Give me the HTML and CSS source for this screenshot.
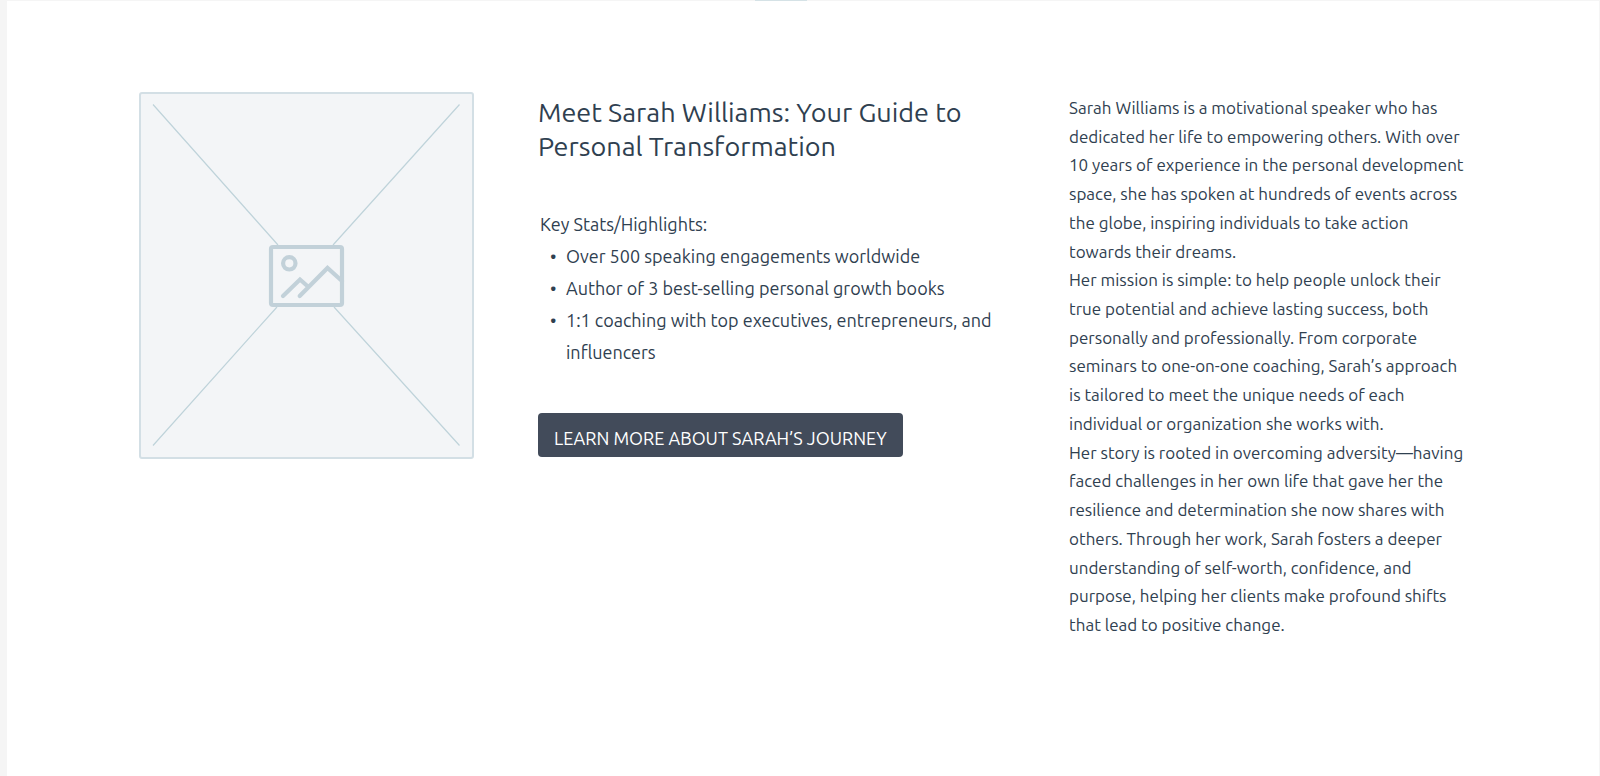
FILE: index.html
```html
<!DOCTYPE html>
<html lang="en">
<head>
<meta charset="utf-8">
<title>Meet Sarah Williams</title>
<link rel="stylesheet" href="styles.css">
</head>
<body>
<main class="page">
  <div class="divider"></div>
  <section class="about">
    <svg class="photo" viewBox="0 0 335 367" role="img" aria-label="Image placeholder">
      <rect class="photo-frame" x="1" y="1" width="333" height="365" rx="2"/>
      <path class="photo-cross" d="M14 12.500 139 153M320.500 12.500 194 153M14 353.500 138 215M320.500 353.500 195 215"/>
      <g class="photo-icon">
        <rect x="132" y="155" width="71" height="58" rx="2"/>
        <circle cx="150.300" cy="171.300" r="6.200"/>
        <path d="M144 204 161 187.500 169.500 195M160.700 204 188.500 176 203 189"/>
      </g>
    </svg>
    <div class="intro">
      <h1 class="title">Meet Sarah Williams: Your Guide to Personal Transformation</h1>
      <div class="stats">
        <p class="stats-label">Key Stats/Highlights:</p>
        <ul class="stats-list">
          <li>Over 500 speaking engagements worldwide</li>
          <li>Author of 3 best-selling personal growth books</li>
          <li>1:1 coaching with top executives, entrepreneurs, and influencers</li>
        </ul>
      </div>
      <button class="cta" type="button">LEARN MORE ABOUT SARAH’S JOURNEY</button>
    </div>
    <div class="bio">
      <p>Sarah Williams is a motivational speaker who has<br>dedicated her life to empowering others. With over<br>10 years of experience in the personal development<br>space, she has spoken at hundreds of events across<br>the globe, inspiring individuals to take action<br>towards their dreams.</p>
      <p>Her mission is simple: to help people unlock their<br>true potential and achieve lasting success, both<br>personally and professionally. From corporate<br>seminars to one-on-one coaching, Sarah’s approach<br>is tailored to meet the unique needs of each<br>individual or organization she works with.</p>
      <p>Her story is rooted in overcoming adversity—having<br>faced challenges in her own life that gave her the<br>resilience and determination she now shares with<br>others. Through her work, Sarah fosters a deeper<br>understanding of self-worth, confidence, and<br>purpose, helping her clients make profound shifts<br>that lead to positive change.</p>
    </div>
  </section>
</main>
</body>
</html>
```
FILE: styles.css
```css
* { box-sizing: border-box; margin: 0; padding: 0; }

body {
  display: flex;
  min-height: 100vh;
  padding: 1px 1px 0 7px;
  background: #f5f5f5;
  color: #2f4050;
  font-family: Ubuntu, "Noto Sans", "Open Sans", sans-serif;
  font-size: 17px;
}

.page {
  position: relative;
  flex: 1;
  background: #fff;
}

.divider {
  position: absolute;
  top: -1px;
  left: 47%;
  width: 52px;
  height: 1px;
  background: #d5e2e6;
}

.about {
  display: grid;
  grid-template-columns: 335fr 467fr 398fr;
  gap: 64px;
  align-items: start;
  padding: 91px 132px;
}

.photo { display: block; width: 100%; }
.photo-frame { fill: #f3f5f7; stroke: #d3dfe5; stroke-width: 2; }
.photo-cross { fill: none; stroke: #bfd3da; stroke-width: 1.2; }
.photo-icon { fill: none; stroke: #c2d1d9; stroke-width: 4.2; stroke-linecap: round; }

.intro { padding-top: 3px; }

.title {
  font-size: 27px;
  font-weight: 400;
  line-height: 34px;
}

.stats {
  margin-top: 45px;
  padding-left: 2px;
  font-size: 18px;
  line-height: 32px;
}

.stats-list { padding-left: 26px; list-style: none; }
.stats-list li::before {
  content: "•";
  float: left;
  width: 16px;
  margin-left: -16px;
}

.cta {
  display: block;
  height: 44px;
  margin-top: 45px;
  padding: 6px 16px 0;
  border: 0;
  border-radius: 4px;
  background: #424b5a;
  color: #fff;
  font: inherit;
  font-size: 18px;
}

.bio {
  padding-top: 2px;
  line-height: 1.69;
  white-space: nowrap;
}
```
